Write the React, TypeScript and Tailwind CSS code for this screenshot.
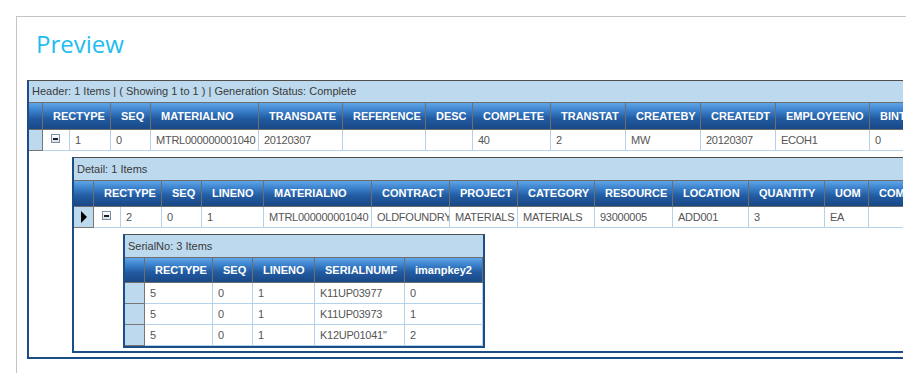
import React from 'react';

type Col = { label: string; w: string; expand?: boolean };
type Row = string[];

const HEAD_BG = 'bg-[linear-gradient(to_bottom,#5ea5e8_0%,#3a80cb_30%,#225ba1_60%,#194886_100%)]';

const Minus = () => (
  <span className="flex h-[9px] w-[9px] items-center justify-center border border-[#7d8ea3] bg-[linear-gradient(#ffffff,#d5dee9)]">
    <span className="h-[2px] w-[5px] bg-[#1f1f1f]" />
  </span>
);

const Arrow = () => (
  <span className="block h-0 w-0 border-y-[6px] border-l-[6px] border-y-transparent border-l-black" />
);

// One grid band: caption bar, column header, data rows, optional nested child grid
const Grid: React.FC<{
  caption: string;
  indW: string;
  cols: Col[];
  rows: Row[];
  barH: string;
  headH: string;
  current?: boolean;
  nestPad?: string;
  className?: string;
  children?: React.ReactNode;
}> = ({ caption, indW, cols, rows, barH, headH, current, nestPad, className, children }) => (
  <div className={`border-t border-l-2 border-b-2 border-t-[#4f4f4f] border-l-[#1b4e86] border-b-[#1b4e86] bg-white ${className ?? ''}`}>
    <div className={`${barH} flex items-center whitespace-nowrap bg-[#bcd9ee] pl-[3px] text-[11px] text-[#3a3a3a]`}>
      {caption}
    </div>

    {/* column header */}
    <div className={`${headH} flex border-y border-[#6e6e6e] ${HEAD_BG}`}>
      <div className={`${indW} shrink-0 border-r border-[#6e6e6e]`} />
      {cols.map((c) => (
        <div
          key={c.label}
          className={`${c.w} flex shrink-0 items-center overflow-hidden whitespace-nowrap border-r border-[#6e6e6e] pl-[10px] text-[11px] font-bold text-white`}
        >
          {c.label}
        </div>
      ))}
    </div>

    {/* data rows */}
    {rows.map((r, ri) => (
      <div key={ri} className="flex h-[21px]">
        <div className={`${indW} flex shrink-0 items-center justify-center border-r border-b border-[#777] bg-[#bcd9ee]`}>
          {current && <Arrow />}
        </div>
        {cols.map((c, ci) =>
          c.expand ? (
            <React.Fragment key={c.label}>
              <div className="flex w-[27px] shrink-0 items-start justify-start border-r border-b border-[#b5d2ea] pl-[8px] pt-[4px]">
                <Minus />
              </div>
              <div className="w-[41px] shrink-0 overflow-hidden whitespace-nowrap border-r border-b border-[#b5d2ea] pl-[5px] text-[11px] leading-[20px] tracking-[-0.25px] text-[#555]">
                {r[ci]}
              </div>
            </React.Fragment>
          ) : (
            <div
              key={c.label}
              className={`${c.w} shrink-0 overflow-hidden whitespace-nowrap border-r border-b border-[#b5d2ea] pl-[5px] text-[11px] leading-[20px] tracking-[-0.25px] text-[#555]`}
            >
              {r[ci]}
            </div>
          )
        )}
      </div>
    ))}

    {children && <div className={nestPad}>{children}</div>}
  </div>
);

const headerCols: Col[] = [
  { label: 'RECTYPE', w: 'w-[68px]', expand: true },
  { label: 'SEQ', w: 'w-[40px]' },
  { label: 'MATERIALNO', w: 'w-[108px]' },
  { label: 'TRANSDATE', w: 'w-[84px]' },
  { label: 'REFERENCE', w: 'w-[83px]' },
  { label: 'DESC', w: 'w-[47px]' },
  { label: 'COMPLETE', w: 'w-[78px]' },
  { label: 'TRANSTAT', w: 'w-[75px]' },
  { label: 'CREATEBY', w: 'w-[75px]' },
  { label: 'CREATEDT', w: 'w-[75px]' },
  { label: 'EMPLOYEENO', w: 'w-[94px]' },
  { label: 'BINTYPE', w: 'w-[80px]' },
];

const detailCols: Col[] = [
  { label: 'RECTYPE', w: 'w-[68px]', expand: true },
  { label: 'SEQ', w: 'w-[40px]' },
  { label: 'LINENO', w: 'w-[62px]' },
  { label: 'MATERIALNO', w: 'w-[108px]' },
  { label: 'CONTRACT', w: 'w-[78px]' },
  { label: 'PROJECT', w: 'w-[68px]' },
  { label: 'CATEGORY', w: 'w-[77px]' },
  { label: 'RESOURCE', w: 'w-[78px]' },
  { label: 'LOCATION', w: 'w-[76px]' },
  { label: 'QUANTITY', w: 'w-[76px]' },
  { label: 'UOM', w: 'w-[44px]' },
  { label: 'COMPLETE', w: 'w-[80px]' },
];

const serialCols: Col[] = [
  { label: 'RECTYPE', w: 'w-[68px]' },
  { label: 'SEQ', w: 'w-[40px]' },
  { label: 'LINENO', w: 'w-[62px]' },
  { label: 'SERIALNUMF', w: 'w-[90px]' },
  { label: 'imanpkey2', w: 'w-[78px]' },
];

export default function App() {
  return (
    <div className="h-[383px] w-[916px] overflow-hidden bg-white font-['Liberation_Sans',Tahoma,Arial,sans-serif]">
      <div className="ml-4 mt-4 h-[357px] w-[890px] border-l border-t border-[#c4c4c4] pl-[10px]">
        <h1 className="mb-[21px] pl-[9px] pt-[12px] font-['Open_Sans',sans-serif] text-[24px] font-medium leading-[30px] text-[#1ebdf0]">
          Preview
        </h1>

        <div className="w-[876px] overflow-hidden">
          <Grid
            caption="Header: 1 Items | ( Showing 1 to 1 ) | Generation Status: Complete"
            indW="w-[14px]"
            cols={headerCols}
            rows={[['1', '0', 'MTRL000000001040', '20120307', '', '', '40', '2', 'MW', '20120307', 'ECOH1', '0']]}
            barH="h-[21px]"
            headH="h-[28px]"
            nestPad="pl-[43px] pt-[6px] pb-[4px]"
            className="w-[960px]"
          >
            <Grid
              caption="Detail: 1 Items"
              indW="w-[20px]"
              cols={detailCols}
              rows={[['2', '0', '1', 'MTRL000000001040', 'OLDFOUNDRY', 'MATERIALS', 'MATERIALS', '93000005', 'ADD001', '3', 'EA', '']]}
              barH="h-[22px]"
              headH="h-[27px]"
              current
              nestPad="pl-[49px] pt-[6px] pb-[3px]"
              className="w-[920px]"
            >
              <Grid
                caption="SerialNo: 3 Items"
                indW="w-[20px]"
                cols={serialCols}
                rows={[
                  ['5', '0', '1', 'K11UP03977', '0'],
                  ['5', '0', '1', 'K11UP03973', '1'],
                  ['5', '0', '1', 'K12UP01041"', '2'],
                ]}
                barH="h-[22px]"
                headH="h-[26px]"
                className="w-[362px] border-r-2 border-r-[#1b4e86]"
              />
            </Grid>
          </Grid>
        </div>
      </div>
    </div>
  );
}
